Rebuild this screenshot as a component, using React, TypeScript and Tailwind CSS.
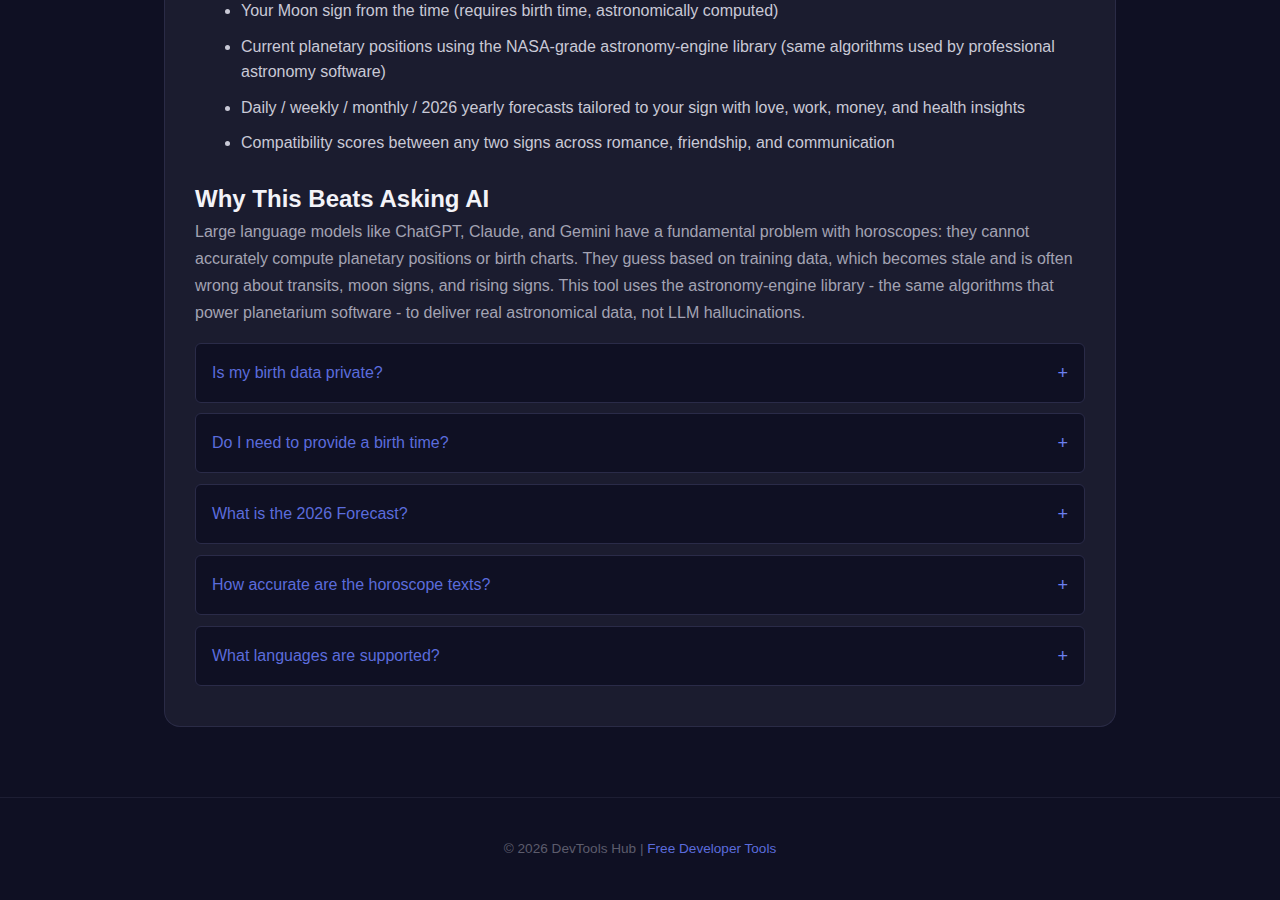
const features = [
  "Your Moon sign from the time (requires birth time, astronomically computed)",
  "Current planetary positions using the NASA-grade astronomy-engine library (same algorithms used by professional astronomy software)",
  "Daily / weekly / monthly / 2026 yearly forecasts tailored to your sign with love, work, money, and health insights",
  "Compatibility scores between any two signs across romance, friendship, and communication",
];

const faqs = [
  "Is my birth data private?",
  "Do I need to provide a birth time?",
  "What is the 2026 Forecast?",
  "How accurate are the horoscope texts?",
  "What languages are supported?",
];

export default function App() {
  return (
    <div className="min-h-[900px] bg-[#0f1023] font-['Liberation_Sans',Arial,sans-serif] overflow-hidden">
      <main className="mx-auto w-[952px]">
        <section className="rounded-b-2xl border border-t-0 border-[#2a2b46] bg-[#1b1c2f] px-[30px] pb-[40px]">
          <ul className="-mt-[2px] list-disc pl-[46px] text-base leading-[1.6] text-[#c9c9d6] marker:text-[#c9c9d6]">
            {features.map((f) => (
              <li key={f} className="mb-[10px]">
                {f}
              </li>
            ))}
          </ul>

          <h2 className="mt-[29px] mb-[4px] text-2xl leading-[1.2] font-bold text-[#f3f3f8]">
            Why This Beats Asking AI
          </h2>
          <p className="mb-[16px] text-base leading-[1.7] text-[#a3a3b3]">
            Large language models like ChatGPT, Claude, and Gemini have a fundamental problem with horoscopes: they cannot
            accurately compute planetary positions or birth charts. They guess based on training data, which becomes stale
            and is often wrong about transits, moon signs, and rising signs. This tool uses the astronomy-engine library -
            the same algorithms that power planetarium software - to deliver real astronomical data, not LLM
            hallucinations.
          </p>

          <div className="flex flex-col gap-[10.75px]">
            {faqs.map((q) => (
              <div
                key={q}
                className="flex h-[60px] items-center justify-between rounded-md border border-[#2a2b48] bg-[#0f1023] pl-4 pr-[16px]"
              >
                <span className="text-base text-[#5b6cdc]">{q}</span>
                <span className="text-lg leading-none text-[#6b7ff0]">+</span>
              </div>
            ))}
          </div>
        </section>
      </main>

      <footer className="mt-[70px] border-t border-[#1d1e33] pt-[41px] pb-[40px] text-center text-[13.6px] text-[#5c5c6c]">
        © 2026 DevTools Hub | <a className="text-[#5b6cdc]">Free Developer Tools</a>
      </footer>
    </div>
  );
}
